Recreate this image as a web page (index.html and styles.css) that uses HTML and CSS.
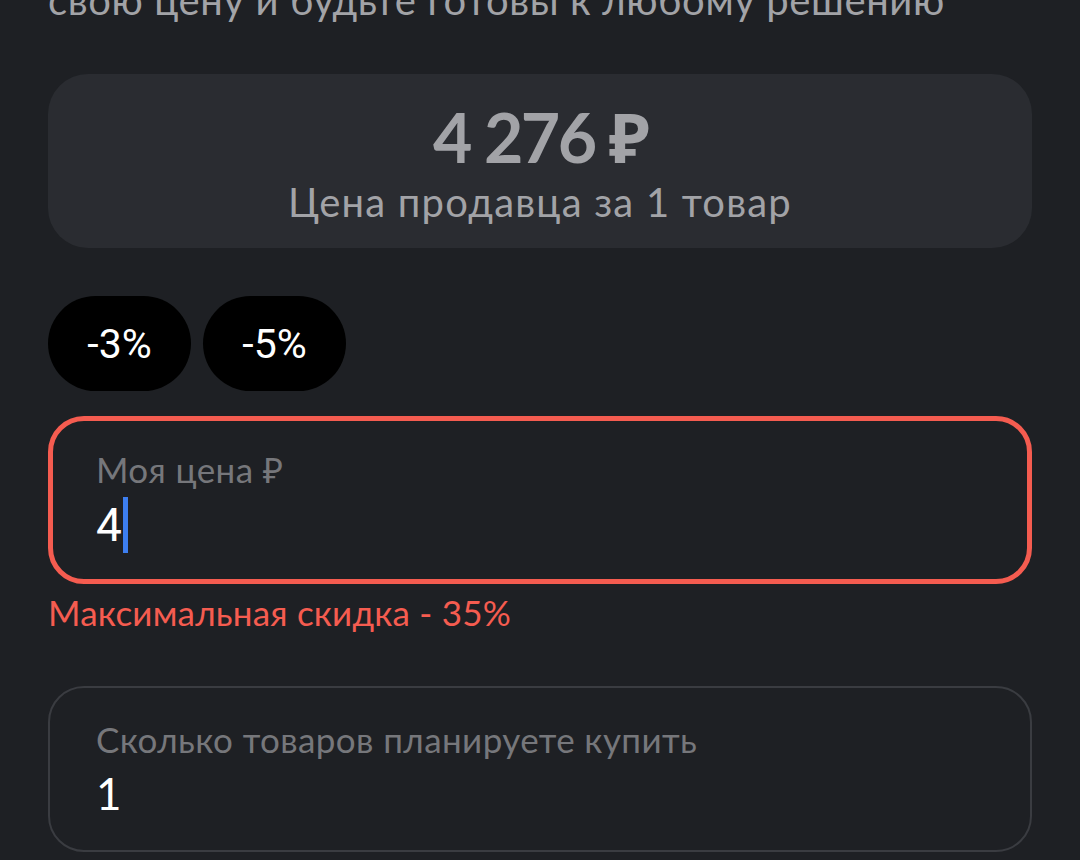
FILE: index.html
```html
<!DOCTYPE html>
<html lang="ru">
<head>
<meta charset="utf-8">
<link rel="stylesheet" href="styles.css">
</head>
<body>
<main class="page">
  <p class="intro">свою цену и будьте готовы к любому решению</p>
  <section class="price-card">
    <div class="price">4 276 ₽</div>
    <div class="price-caption">Цена продавца за 1 товар</div>
  </section>
  <div class="chips">
    <button class="chip">-3%</button>
    <button class="chip">-5%</button>
  </div>
  <div class="field field-error">
    <div class="field-label">Моя цена ₽</div>
    <div class="field-value value-roboto">4<span class="caret"></span></div>
  </div>
  <div class="error-text">Максимальная скидка - 35%</div>
  <div class="field field-normal">
    <div class="field-label">Сколько товаров планируете купить</div>
    <div class="field-value">1</div>
  </div>
</main>
</body>
</html>
```
FILE: styles.css
```css
* { box-sizing: border-box; }
html, body {
  margin: 0;
  padding: 0;
  background: #1e2024;
  height: 100%;
  overflow: hidden;
}
body {
  font-family: "Lato", "Noto Sans", sans-serif;
  color: #a2a3a7;
}
.page {
  padding: 0 48px;
}
.intro {
  margin: -24.5px 0 0;
  font-size: 40px;
  line-height: 48px;
  letter-spacing: 0.6px;
  color: #a2a3a7;
}
.price-card {
  margin-top: 50.5px;
  height: 174px;
  background: #2a2c31;
  border-radius: 40px;
  padding-top: 31px;
  text-align: center;
}
.price {
  font-size: 68px;
  line-height: 64px;
  font-weight: 700;
  letter-spacing: -2.5px;
  color: #a2a3a7;
}
.price-caption {
  margin-top: 8.5px;
  font-size: 40px;
  line-height: 48px;
  letter-spacing: 1.2px;
  color: #a2a3a7;
}
.chips {
  display: flex;
  gap: 12px;
  margin-top: 48px;
}
.chip {
  height: 95px;
  width: 143px;
  border: none;
  border-radius: 48px;
  background: #000;
  color: #fff;
  font-family: "Roboto", sans-serif;
  font-size: 41px;
  padding: 0;
}
.field {
  border-radius: 36px;
}
.field-error {
  margin-top: 25px;
  height: 168px;
  border: 5px solid #f55c50;
  padding: 26.5px 43px 0;
}
.field-normal {
  margin-top: 53.5px;
  height: 166px;
  border: 2px solid #3a3c41;
  padding: 29.5px 46px 0;
}
.field-label {
  font-size: 35px;
  line-height: 42px;
  letter-spacing: 0.4px;
  color: #76777b;
}
.field-value {
  margin-top: 5.5px;
  font-size: 44px;
  line-height: 56px;
  color: #fff;
  display: flex;
  align-items: flex-start;
}
.value-roboto {
  margin-top: 7px;
  font-family: "Roboto", sans-serif;
  font-size: 46px;
}
.caret {
  display: inline-block;
  width: 5px;
  height: 56px;
  margin-left: 1px;
  background: #3d7ef0;
}
.error-text {
  margin-top: 6.5px;
  font-size: 35px;
  line-height: 42px;
  letter-spacing: 0.2px;
  color: #f55c50;
}
```
